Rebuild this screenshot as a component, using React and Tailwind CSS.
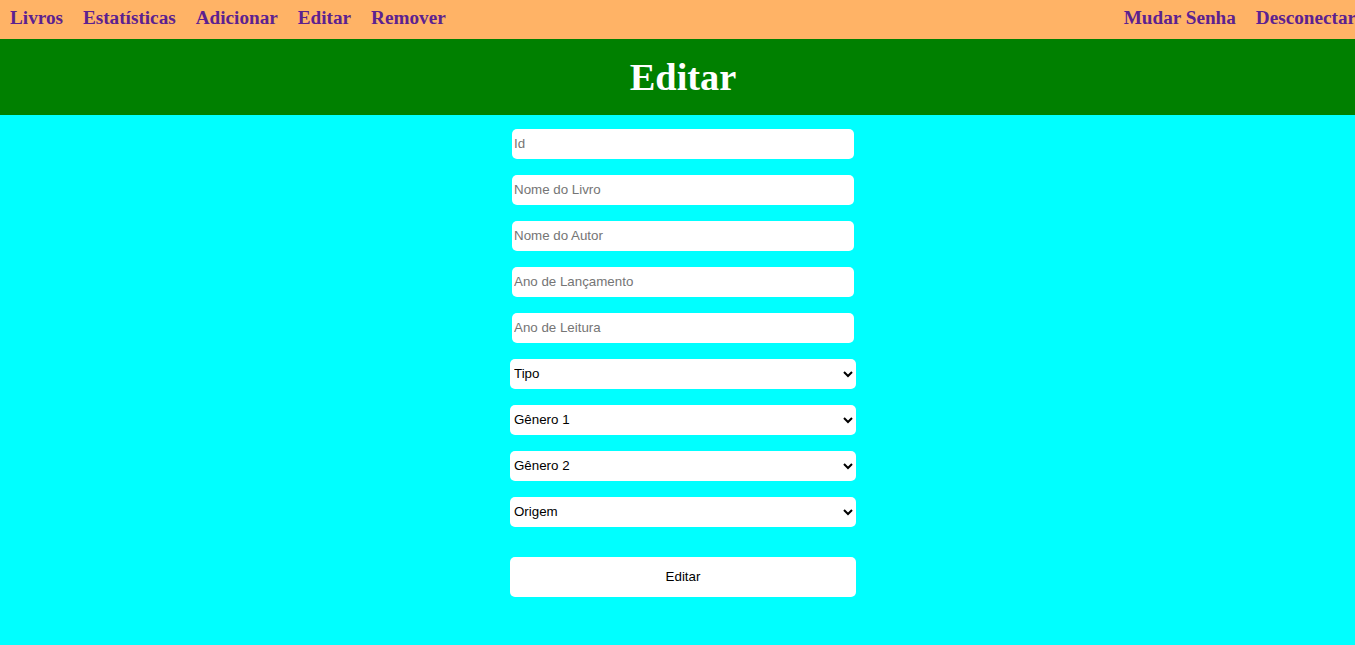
import { useState } from 'react';

export default function App() {
  const [form, setForm] = useState({});
  const links = ['Livros', 'Estatísticas', 'Adicionar', 'Editar', 'Remover'];
  const fields = ['Id', 'Nome do Livro', 'Nome do Autor', 'Ano de Lançamento', 'Ano de Leitura'];
  const selects = ['Tipo', 'Gênero 1', 'Gênero 2', 'Origem'];

  return (
    <div className="w-full min-h-screen overflow-hidden bg-[#00ffff]">
      <div className="w-[1366px]">
        {/* Top nav */}
        <nav className="h-[39px] bg-[#ffb366] flex items-center justify-between px-[10px] pb-[4px] font-['Liberation_Serif',serif] font-bold text-[19.2px] text-[#5c2190]">
          <div className="flex gap-[20px]">
            {links.map((l) => (
              <a key={l} href="#" className="leading-none">{l}</a>
            ))}
          </div>
          <div className="flex gap-[20px]">
            <a href="#" className="leading-none">Mudar Senha</a>
            <a href="#" className="leading-none">Desconectar</a>
          </div>
        </nav>

        {/* Title */}
        <header className="h-[76px] bg-[#008000] flex items-center justify-center">
          <h1 className="font-['Liberation_Serif',serif] font-bold text-[38.4px] text-white leading-none">Editar</h1>
        </header>

        {/* Form */}
        <form className="flex flex-col items-center pt-[14px] font-['Liberation_Sans',Arial,sans-serif] text-[13.33px]">
          {fields.map((f) => (
            <input
              key={f}
              placeholder={f}
              value={form[f] || ''}
              onChange={(e) => setForm({ ...form, [f]: e.target.value })}
              className="w-[342px] h-[30px] mb-[16px] bg-white rounded-[5px] px-[2px] pb-[2px] text-black placeholder:text-[#757575] outline-none"
            />
          ))}
          {selects.map((s) => (
            <select
              key={s}
              defaultValue=""
              className="w-[346px] h-[30px] mb-[16px] bg-white rounded-[5px] pl-0 pb-[2px] text-black outline-none"
            >
              <option value="">{s}</option>
            </select>
          ))}
          <button
            type="button"
            className="w-[346px] h-[40px] mt-[14px] bg-white rounded-[5px] text-black"
          >
            Editar
          </button>
        </form>
      </div>
    </div>
  );
}
